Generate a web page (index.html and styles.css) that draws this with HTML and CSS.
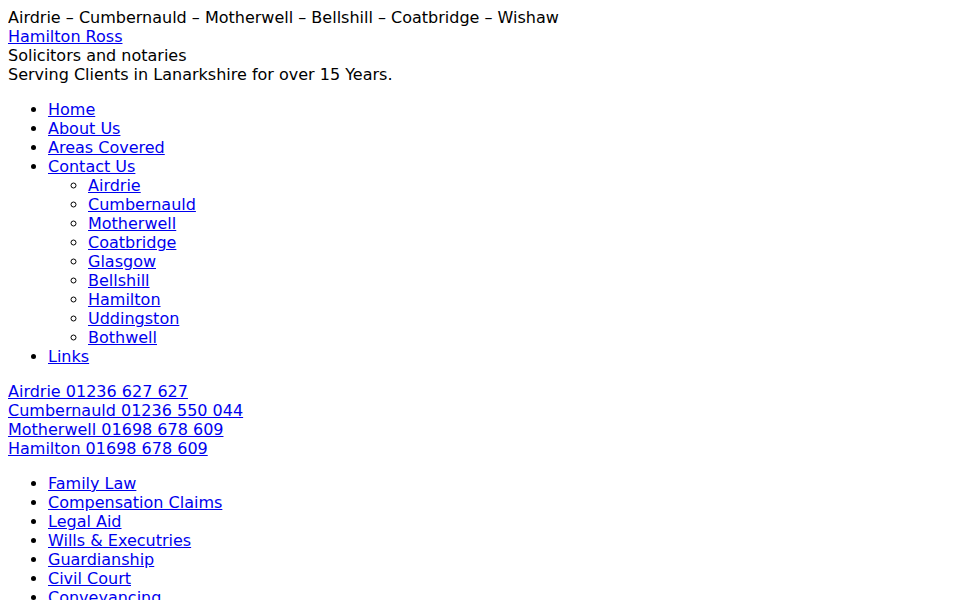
FILE: index.html
```html
<!DOCTYPE html>
<html lang="en">
<head>
<meta charset="utf-8">
<title>Hamilton Ross – Solicitors and notaries</title>
<link rel="stylesheet" href="styles.css">
</head>
<body>
<div class="towns">Airdrie – Cumbernauld – Motherwell – Bellshill – Coatbridge – Wishaw</div>
<div class="brand"><a href="#">Hamilton Ross</a></div>
<div class="tagline">Solicitors and notaries</div>
<div class="strap">Serving Clients in Lanarkshire for over 15 Years.</div>
<ul class="nav">
  <li><a href="#">Home</a></li>
  <li><a href="#">About Us</a></li>
  <li><a href="#">Areas Covered</a></li>
  <li><a href="#">Contact Us</a>
    <ul class="sub">
      <li><a href="#">Airdrie</a></li>
      <li><a href="#">Cumbernauld</a></li>
      <li><a href="#">Motherwell</a></li>
      <li><a href="#">Coatbridge</a></li>
      <li><a href="#">Glasgow</a></li>
      <li><a href="#">Bellshill</a></li>
      <li><a href="#">Hamilton</a></li>
      <li><a href="#">Uddingston</a></li>
      <li><a href="#">Bothwell</a></li>
    </ul>
  </li>
  <li><a href="#">Links</a></li>
</ul>
<div class="phones">
  <div><a href="#">Airdrie 01236 627 627</a></div>
  <div><a href="#">Cumbernauld 01236 550 044</a></div>
  <div><a href="#">Motherwell 01698 678 609</a></div>
  <div><a href="#">Hamilton 01698 678 609</a></div>
</div>
<ul class="services">
  <li><a href="#">Family Law</a></li>
  <li><a href="#">Compensation Claims</a></li>
  <li><a href="#">Legal Aid</a></li>
  <li><a href="#">Wills &amp; Executries</a></li>
  <li><a href="#">Guardianship</a></li>
  <li><a href="#">Civil Court</a></li>
  <li><a href="#">Conveyancing</a></li>
  <li><a href="#">Criminal Law</a></li>
</ul>
</body>
</html>
```
FILE: styles.css
```css
body {
  margin: 8px;
  font-family: "DejaVu Sans", sans-serif;
  font-size: 16px;
  color: #000;
  background: #fff;
}
a {
  color: #0000ee;
}
.nav, .services {
  margin: 16px 0;
  padding-left: 40px;
}
.sub {
  margin: 0;
  padding-left: 40px;
  list-style-type: circle;
}
.phones {
  margin: 16px 0;
}
```
